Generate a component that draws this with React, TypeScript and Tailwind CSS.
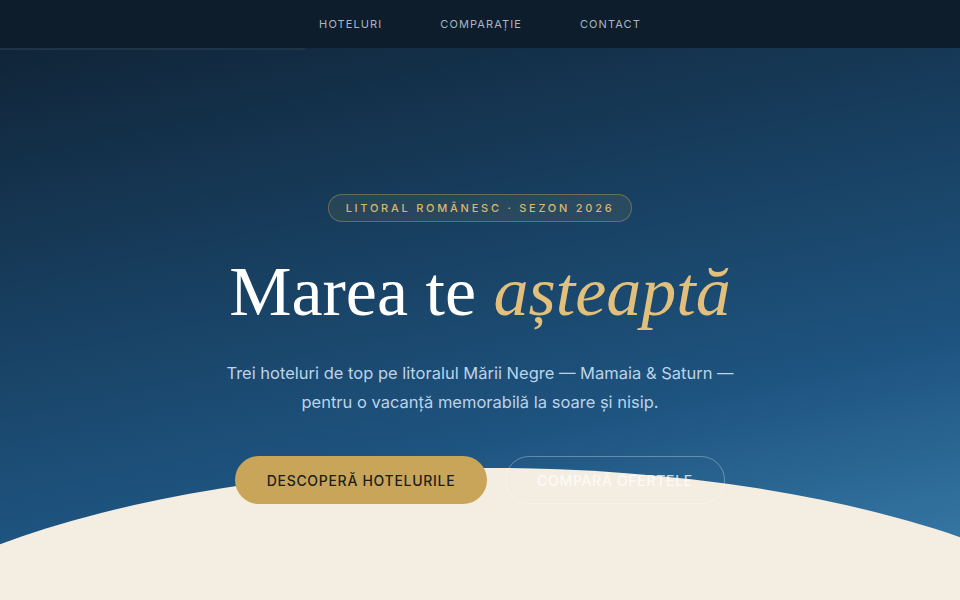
export default function App() {
  return (
    <div
      className="relative h-[600px] w-full overflow-hidden bg-[linear-gradient(168deg,#0f2031_0%,#163957_32%,#1e5480_68%,#3c80ae_100%)]"
      style={{ fontFamily: 'Inter, "Noto Sans", sans-serif' }}
    >
      <nav className="relative z-20 flex h-12 items-center justify-center gap-[58px] bg-[#0e1d2c] text-[11px] tracking-[0.1em] text-[#aab5c1]">
        <a>HOTELURI</a>
        <a>COMPARAȚIE</a>
        <a>CONTACT</a>
        <div className="absolute bottom-[-2px] left-0 h-[2px] w-[305px] bg-[#1e3448]" />
      </nav>

      <section className="relative flex flex-col items-center pt-[146px]">
        <div className="flex h-[28px] w-[304px] items-center justify-center rounded-full border border-[#c9a55a]/40 bg-[#c9a55a]/10 text-[11px] font-medium tracking-[0.25em] text-[#d8b86c]">
          LITORAL ROMÂNESC · SEZON 2026
        </div>

        <h1
          className="mt-[30px] text-[70px] leading-[80px] text-white"
          style={{ fontFamily: '"Liberation Serif", serif' }}
        >
          Marea te <em className="text-[#e2c07c]">așteaptă</em>
        </h1>

        <p className="mt-[27px] text-center text-[16.5px] leading-[29px] text-[#bcd3e8]">
          Trei hoteluri de top pe litoralul Mării Negre — Mamaia &amp; Saturn —
          <br />
          pentru o vacanță memorabilă la soare și nisip.
        </p>

        <div className="mt-[39px] flex gap-[18px]">
          <button className="relative z-20 h-12 w-[252px] rounded-full bg-[#c9a55a] text-[14px] font-medium tracking-[0.05em] text-[#1d1d1d]">
            DESCOPERĂ HOTELURILE
          </button>
          <button className="relative z-20 h-12 w-[220px] rounded-full border border-white/30 text-[14px] font-medium tracking-[0.05em] text-white/75">
            COMPARĂ OFERTELE
          </button>
        </div>
      </section>

      <svg
        className="absolute bottom-0 left-0 z-10"
        width="960"
        height="132"
        viewBox="0 0 960 132"
      >
        <ellipse cx="490" cy="267" rx="700" ry="267" fill="#f4ede1" />
      </svg>
    </div>
  )
}
